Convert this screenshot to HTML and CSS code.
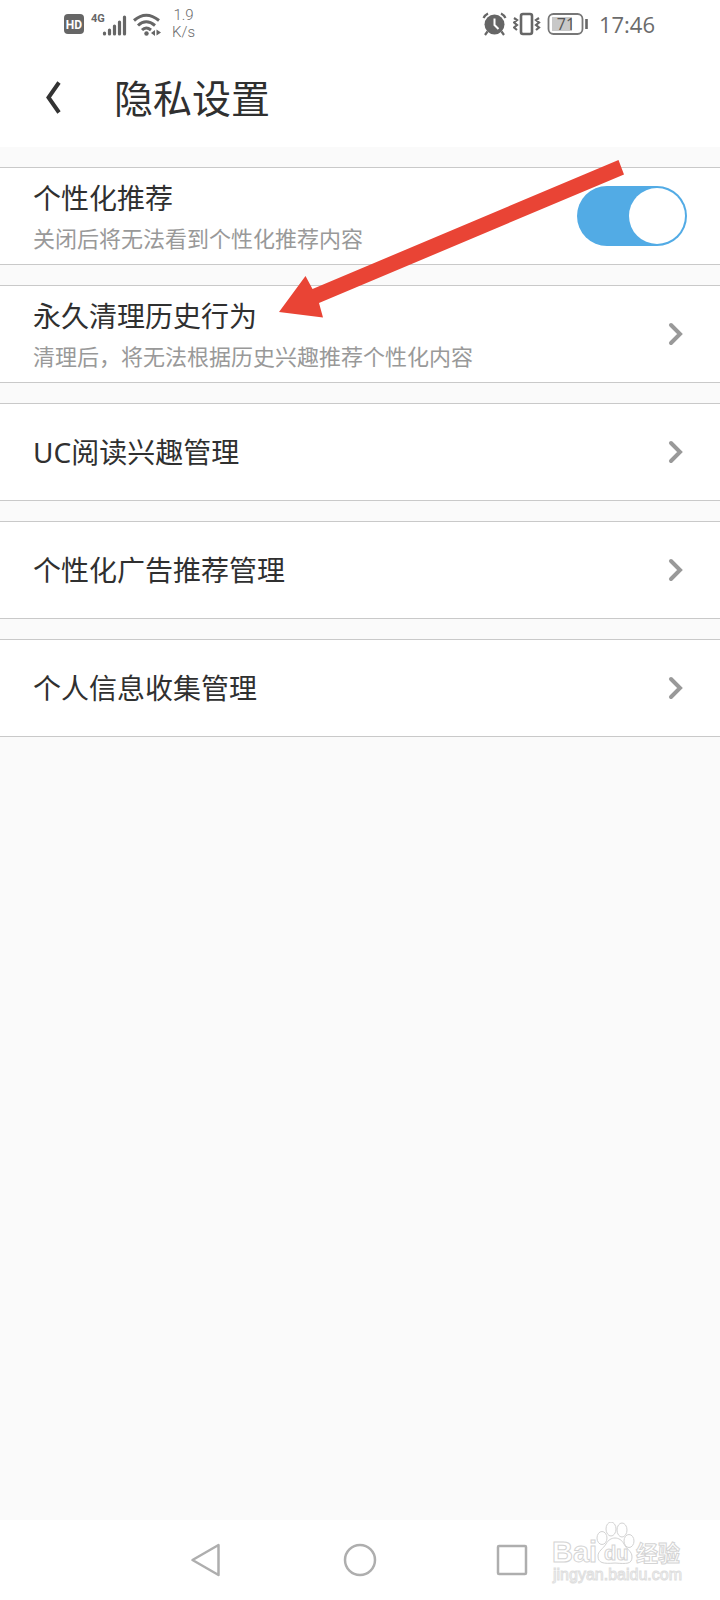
FILE: index.html
```html
<!DOCTYPE html>
<html lang="zh-CN">
<head>
<meta charset="utf-8">
<meta name="viewport" content="width=device-width, initial-scale=1">
<title>隐私设置</title>
<link rel="stylesheet" href="styles.css">
</head>
<body>
<div class="screen">
  <div class="status">
    <div class="status-left">
      <svg width="22" height="22" viewBox="0 0 22 22"><rect x="1" y="1" width="20" height="20" rx="4" fill="#666"/><text x="11" y="15.5" class="hd" text-anchor="middle">HD</text></svg>
      <svg class="signal" width="38" height="26" viewBox="0 0 38 26"><text x="1" y="11" class="gen">4G</text><g stroke="#666" stroke-width="3.200" stroke-linecap="round"><path d="M14.500 23v-1M19.500 23v-4M24.500 23v-8M29.500 23v-12M34.500 23v-17"/></g></svg>
      <svg width="30" height="26" viewBox="0 0 30 26"><g fill="none" stroke="#666" stroke-width="3"><path d="M1 9.500Q13 -1 26 9.500"/><path d="M5 14.500Q13 7 22 14.500"/><path d="M9 19Q13 15 18 19"/></g><circle cx="13.500" cy="22.500" r="2.200" fill="#666"/><path d="M22 19v6l-4-3zM23.500 18.500l4.500 3-4.500 3z" fill="#666"/></svg>
      <div class="speed"><span>1.9</span><span>K/s</span></div>
    </div>
    <div class="status-right">
      <svg width="25" height="24" viewBox="0 0 25 24"><circle cx="12.500" cy="12.500" r="10" fill="#666"/><path d="M12.500 6.500v6.500l4 4" fill="none" stroke="#fff" stroke-width="2"/><path d="M1.500 6Q3 3 6 1.500M19 1.500Q22 3 23.500 6M5.500 19.500L3 23M19.500 19.500L22 23" fill="none" stroke="#666" stroke-width="2.200"/></svg>
      <svg width="28" height="24" viewBox="0 0 28 24"><g fill="none" stroke="#666"><rect x="8" y="2" width="11" height="20" rx="2" stroke-width="2.600"/><path d="M1 6l3 2-3 2.500 3 2.500-3 2.500 3 2.500M26 6l-3 2 3 2.500-3 2.500 3 2.500-3 2.500" stroke-width="2.200"/></g></svg>
      <svg width="42" height="22" viewBox="0 0 42 22"><rect x="1.500" y="1" width="34" height="20" rx="5" fill="none" stroke="#777" stroke-width="1.800"/><rect x="5" y="4" width="20" height="14" fill="#c8c8c8"/><text x="19" y="16.500" text-anchor="middle" class="battery">71</text><path d="M39.500 6v10" stroke="#666" stroke-width="2.600"/></svg>
      <time class="clock">17:46</time>
    </div>
  </div>

  <header class="header">
    <button class="back" aria-label="返回"><svg width="18" height="36" viewBox="0 0 18 36"><path d="M15 2.500L4.500 17.500 15 32.500" fill="none" stroke="#333" stroke-width="4"/></svg></button>
    <h1 class="title">隐私设置</h1>
  </header>

  <main class="list">
    <div class="row">
      <label class="copy" for="recommend"><span class="name">个性化推荐</span><span class="note">关闭后将无法看到个性化推荐内容</span></label>
      <input class="toggle" id="recommend" type="checkbox" role="switch" checked>
    </div>
    <button class="row">
      <span class="copy"><span class="name">永久清理历史行为</span><span class="note">清理后，将无法根据历史兴趣推荐个性化内容</span></span>
      <svg class="chevron" viewBox="0 0 16 24"><path d="M3 3l9 9-9 9"/></svg>
    </button>
    <button class="row">
      <span class="name">UC阅读兴趣管理</span>
      <svg class="chevron" viewBox="0 0 16 24"><path d="M3 3l9 9-9 9"/></svg>
    </button>
    <button class="row">
      <span class="name">个性化广告推荐管理</span>
      <svg class="chevron" viewBox="0 0 16 24"><path d="M3 3l9 9-9 9"/></svg>
    </button>
    <button class="row">
      <span class="name">个人信息收集管理</span>
      <svg class="chevron" viewBox="0 0 16 24"><path d="M3 3l9 9-9 9"/></svg>
    </button>
    <svg class="arrow" width="350" height="164" viewBox="0 0 350 164"><path d="M342.500 1l5.500 14.500L43 144l4 14.500L3 153 29.500 117l7 13z" fill="#e94435"/></svg>
  </main>

  <nav class="nav">
    <button aria-label="返回"><svg width="34" height="34" viewBox="0 0 34 34"><path d="M28.500 2v30L2.500 17z"/></svg></button>
    <button aria-label="主页"><svg width="34" height="34" viewBox="0 0 34 34"><circle cx="17" cy="17" r="15"/></svg></button>
    <button aria-label="最近任务"><svg width="34" height="34" viewBox="0 0 34 34"><rect x="2" y="3" width="28" height="28" rx="1"/></svg></button>
    <svg class="watermark" width="136" height="64" viewBox="0 0 136 64">
      <g fill="#fff" stroke="#d2d2d2"><ellipse cx="53" cy="16" rx="5" ry="6.500"/><ellipse cx="62" cy="7" rx="5" ry="7"/><ellipse cx="73" cy="8" rx="5" ry="7"/><ellipse cx="80" cy="19" rx="5" ry="6.500"/><path d="M57 22C61 14 71 14 75 22C78 28 83 29 83 35C83 42 78 42 66 41C54 42 49 41 49 34C49 29 54 27 57 22Z"/></g>
      <text x="3" y="40" class="wm-logo">Bai</text>
      <text x="55" y="38" class="wm-du">du</text>
      <text x="87" y="39" class="wm-cn">经验</text>
      <text x="4" y="58" class="wm-url">jingyan.baidu.com</text>
    </svg>
  </nav>
</div>
</body>
</html>
```
FILE: styles.css
```css
* { box-sizing: border-box; }
body {
  margin: 0;
  background: #fafafa;
  color: #303030;
  font-family: "Noto Sans", "Noto Sans CJK SC", sans-serif;
}
button { border: 0; padding: 0; background: none; color: inherit; font: inherit; }
svg { display: block; flex: none; }
.screen { display: flex; flex-direction: column; min-height: 100vh; }

.status {
  display: flex;
  justify-content: space-between;
  height: 48px;
  padding: 0 65px 0 63px;
  background: #fff;
  color: #6b6b6b;
}
.status-left, .status-right { display: flex; align-items: center; }
.status-left { gap: 5px; }
.status-right { gap: 6px; }
.hd { fill: #fff; font: 700 12px Roboto, sans-serif; }
.gen { fill: #666; font: 700 11px Roboto, sans-serif; }
.battery { fill: #555; font: 16px "Open Sans", sans-serif; }
.speed {
  display: flex;
  flex-direction: column;
  align-items: center;
  padding-left: 4px;
  font: 300 15px/17px Roboto, sans-serif;
}
.clock { padding-left: 4px; font: 22px/30px "Open Sans", sans-serif; }

.header {
  display: flex;
  align-items: center;
  gap: 52px;
  height: 99px;
  padding: 0 44px;
  background: #fff;
}
.title { margin: 0; font-size: 39px; font-weight: 400; line-height: 48px; }

.list {
  position: relative;
  display: flex;
  flex: 1;
  flex-direction: column;
  gap: 20px;
  padding: 20px 0;
}
.row {
  display: flex;
  align-items: center;
  justify-content: space-between;
  width: 100%;
  min-height: 98px;
  padding: 8px 33px;
  border: solid #c9c9c9;
  border-width: 1px 0;
  background: #fff;
  text-align: left;
}
.copy { display: flex; flex-direction: column; gap: 4px; }
.name { font-size: 28px; line-height: 40px; }
.note { color: #999; font-size: 22px; line-height: 32px; }
.chevron { width: 16px; height: 24px; margin-right: 3px; fill: none; stroke: #999; stroke-width: 4; stroke-linecap: round; }
.toggle {
  flex: none;
  width: 110px;
  height: 60px;
  margin: 0;
  padding: 2px;
  border-radius: 30px;
  background: #ccc;
  appearance: none;
}
.toggle::before {
  content: "";
  display: block;
  width: 56px;
  height: 56px;
  border-radius: 50%;
  background: #fff;
}
.toggle:checked { background: #52abe5; }
.toggle:checked::before { margin-left: auto; }
.arrow { position: absolute; top: 12px; right: 94px; pointer-events: none; }

.nav {
  position: relative;
  display: flex;
  justify-content: center;
  height: 80px;
  background: #fff;
}
.nav button { display: flex; align-items: center; justify-content: center; width: 153px; }
.nav button svg { fill: none; stroke: #aeaeae; stroke-width: 2.5; stroke-linejoin: round; }
.watermark { position: absolute; top: 2px; right: 35px; }
.watermark text { fill: #fff; stroke: #d4d4d4; }
.watermark .wm-logo { font: 700 29px "Liberation Sans", sans-serif; }
.watermark .wm-du { font: 700 20px "Liberation Sans", sans-serif; }
.watermark .wm-cn { font: 700 22px "Noto Sans CJK SC", sans-serif; }
.watermark .wm-url { font: 16px "Liberation Sans", sans-serif; stroke: #dedede; }
```
